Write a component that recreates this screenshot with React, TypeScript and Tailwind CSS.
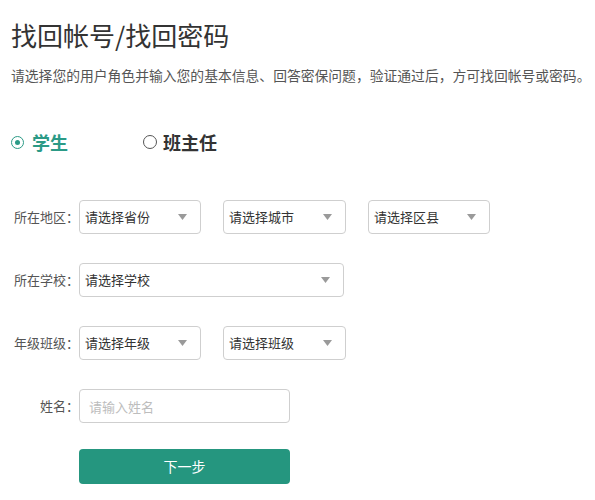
import React from 'react';

const font = "font-['Noto_Sans_CJK_SC','Noto_Sans',sans-serif]";

function Caret() {
  return (
    <svg width="9" height="6" viewBox="0 0 9 6" className="shrink-0">
      <path d="M0 0 L9 0 L4.5 6 Z" fill="#9a9a9a" />
    </svg>
  );
}

function Select({ text, width }: { text: string; width: string }) {
  return (
    <div
      className={`${width} h-[34px] border border-[#cfcfcf] rounded-[4px] bg-white flex items-center justify-between pl-[5px] pr-[13px] text-[13px] text-[#333]`}
    >
      <span>{text}</span>
      <Caret />
    </div>
  );
}

function Row({ label, children }: { label: string; children: React.ReactNode }) {
  return (
    <div className="flex items-center">
      <div className="w-[79px] text-right text-[13px] text-[#555] whitespace-nowrap">{label}</div>
      <div className="flex gap-[22px]">{children}</div>
    </div>
  );
}

export default function App() {
  return (
    <div className={`${font} w-[595px] h-[500px] bg-white overflow-hidden`}>
      {/* Header */}
      <div className="pl-[11px] pt-[18px]">
        <h1 className="text-[26px] leading-[34px] text-[#333] font-normal whitespace-nowrap">找回帐号/找回密码</h1>
        <p className="mt-[13px] text-[13.8px] leading-[20px] text-[#555] whitespace-nowrap">
          请选择您的用户角色并输入您的基本信息、回答密保问题，验证通过后，方可找回帐号或密码。
        </p>
      </div>

      {/* Role radios */}
      <div className="mt-[45px] pl-[11px] h-[24px] flex items-center">
        <label className="flex items-center w-[132px]">
          <span className="w-[13px] h-[13px] rounded-full border-[1.5px] border-[#2b9a86] flex items-center justify-center">
            <span className="w-[5px] h-[5px] rounded-full bg-[#2b9a86]" />
          </span>
          <span className="ml-[8px] text-[18px] font-bold text-[#2b9a86]">学生</span>
        </label>
        <label className="flex items-center">
          <span className="w-[14px] h-[14px] rounded-full border-[1.5px] border-[#555]" />
          <span className="ml-[6px] text-[18px] font-bold text-[#333]">班主任</span>
        </label>
      </div>

      {/* Form */}
      <div className="mt-[46px] flex flex-col gap-[29px]">
        <Row label="所在地区：">
          <Select text="请选择省份" width="w-[122px]" />
          <Select text="请选择城市" width="w-[123px]" />
          <Select text="请选择区县" width="w-[122px]" />
        </Row>
        <Row label="所在学校：">
          <Select text="请选择学校" width="w-[265px]" />
        </Row>
        <Row label="年级班级：">
          <Select text="请选择年级" width="w-[122px]" />
          <Select text="请选择班级" width="w-[123px]" />
        </Row>
        <Row label="姓名：">
          <input
            placeholder="请输入姓名"
            className="w-[211px] h-[34px] border border-[#cfcfcf] rounded-[4px] px-[9px] text-[13px] text-[#333] placeholder:text-[#bdbdbd] outline-none"
          />
        </Row>
        <div className="pl-[79px] -mt-[3px]">
          <button className="w-[211px] h-[35px] rounded-[4px] bg-[#25967f] text-white text-[14px]">下一步</button>
        </div>
      </div>
    </div>
  );
}
